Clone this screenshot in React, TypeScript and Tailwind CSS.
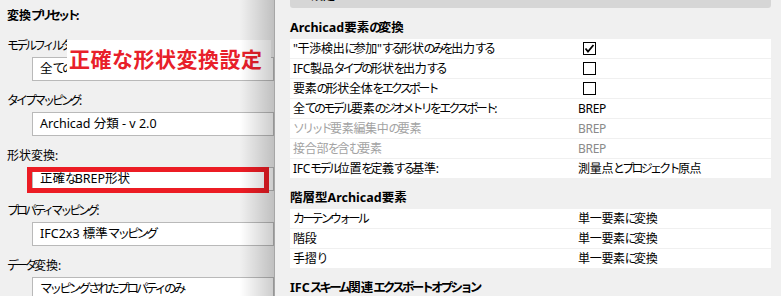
import React from "react";

const FONT = "font-['Noto_Sans','Noto_Sans_CJK_JP',sans-serif]";

function J({ t, k = "tracking-[-2.75px]" }: { t: string; k?: string }) {
  const parts = t.split(/([\u3040-\u30ff]+)/);
  return (
    <>
      {parts.map((p, i) =>
        /[\u3040-\u30ff]/.test(p) ? (
          <span key={i} className={k}>
            {p}
          </span>
        ) : (
          <React.Fragment key={i}>{p}</React.Fragment>
        )
      )}
    </>
  );
}

function Label({ t, bold }: { t: string; bold?: boolean }) {
  return (
    <div className={`h-[20px] leading-[20px] pl-[7px] text-[12px] text-black whitespace-nowrap ${bold ? "font-bold" : ""}`}>
      <J t={t} k="tracking-[-3px]" />
    </div>
  );
}

function Dropdown({ t }: { t: string }) {
  return (
    <div className="ml-[32px] mt-[1px] h-[24px] bg-white border border-[#b9b9b9] flex items-center pl-[7px] text-[12.5px] text-black whitespace-nowrap">
      <span>
        <J t={t} k="tracking-[-2.9px]" />
      </span>
    </div>
  );
}

function Check({ checked }: { checked?: boolean }) {
  return (
    <svg width="13" height="13" viewBox="0 0 13 13" className="ml-[5px]">
      <rect x="0.5" y="0.5" width="12" height="12" fill="white" stroke="black" strokeWidth="1" />
      {checked && <path d="M2.5 6.5 L5 9.5 L10.5 3" fill="none" stroke="black" strokeWidth="1.8" />}
    </svg>
  );
}

type Row = { label: string; value?: string; check?: boolean | "off"; gray?: boolean };

function Rows({ rows }: { rows: Row[] }) {
  return (
    <div className="shrink-0 flex flex-col gap-[1px]">
      {rows.map((r, i) => (
        <div key={i} className="shrink-0 h-[19px] bg-white flex items-center text-[12px] leading-[19px] whitespace-nowrap tracking-[-0.3px]">
          <div className={`w-[288px] shrink-0 pl-[3px] ${r.gray ? "text-[#a3a3a3]" : "text-black"}`}>
            <J t={r.label} />
          </div>
          <div className={`flex items-center ${r.gray ? "text-[#8a8a8a]" : "text-black"}`}>
            {r.check !== undefined ? <Check checked={r.check === true} /> : r.value ? <J t={r.value} /> : null}
          </div>
        </div>
      ))}
    </div>
  );
}

function Heading({ t }: { t: string }) {
  return (
    <div className="shrink-0 mt-[10px] mb-[1px] h-[20px] leading-[20px] text-[12.5px] font-bold text-black whitespace-nowrap">
      <J t={t} k="tracking-[-2.8px]" />
    </div>
  );
}

function Group({ label, value }: { label: string; value: string }) {
  return (
    <div className="shrink-0 mt-[10px]">
      <Label t={label} />
      <Dropdown t={value} />
    </div>
  );
}

export default function App() {
  return (
    <div className={`w-[781px] h-[296px] overflow-hidden flex bg-[#f0f0f0] ${FONT}`}>
      {/* Left panel */}
      <div className="relative w-[274px] shrink-0 overflow-hidden bg-[#f0f0f0] pt-[6px] flex flex-col">
        <Label t="変換プリセット:" bold />
        <Group label="モデルフィルター:" value="全ての要素" />
        <Group label="タイプマッピング:" value="Archicad 分類 - v 2.0" />
        <div className="shrink-0 mt-[10px]">
          <Label t="形状変換:" />
          <div className="relative">
            <Dropdown t="正確なBREP形状" />
            <div className="absolute left-[27px] top-0 w-[242px] h-[26px] border-[5px] border-[#ec1c24]" />
          </div>
        </div>
        <Group label="プロパティマッピング:" value="IFC2x3 標準マッピング" />
        <Group label="データ変換:" value="マッピングされたプロパティのみ" />

        {/* annotation */}
        <div className="absolute left-[67px] top-[40px] w-[204px] h-[38px] bg-white flex items-center pl-[2px] text-[21px] font-bold text-[#e8202a] whitespace-nowrap tracking-[0.5px] font-['Noto_Sans_CJK_JP',sans-serif]">
          正確な形状変換設定
        </div>
        {/* shadow */}
        <div className="absolute right-0 top-0 bottom-0 w-[34px] bg-gradient-to-r from-black/0 to-black/20 pointer-events-none" />
      </div>
      <div className="w-[1px] shrink-0 bg-[#a6a6a6]" />

      {/* Right panel */}
      <div className="flex-1 min-w-0 pl-[15px] pr-[10px] flex flex-col">
        <div className="shrink-0 h-[8px] bg-[#d6d6d6] rounded-b-[3px] overflow-hidden">
          <div className="-mt-[10px] pl-[21px] text-[12px] leading-[12px] text-black">設定</div>
        </div>
        <Heading t="Archicad要素の変換" />
        <Rows
          rows={[
            { label: "\"干渉検出に参加\"する形状のみを出力する", check: true },
            { label: "IFC製品タイプの形状を出力する", check: "off" },
            { label: "要素の形状全体をエクスポート", check: "off" },
            { label: "全てのモデル要素のジオメトリをエクスポート:", value: "BREP" },
            { label: "ソリッド要素編集中の要素", value: "BREP", gray: true },
            { label: "接合部を含む要素", value: "BREP", gray: true },
            { label: "IFCモデル位置を定義する基準:", value: "測量点とプロジェクト原点" },
          ]}
        />
        <Heading t="階層型Archicad要素" />
        <Rows
          rows={[
            { label: "カーテンウォール", value: "単一要素に変換" },
            { label: "階段", value: "単一要素に変換" },
            { label: "手摺り", value: "単一要素に変換" },
          ]}
        />
        <Heading t="IFCスキーム関連エクスポートオプション" />
      </div>
    </div>
  );
}
